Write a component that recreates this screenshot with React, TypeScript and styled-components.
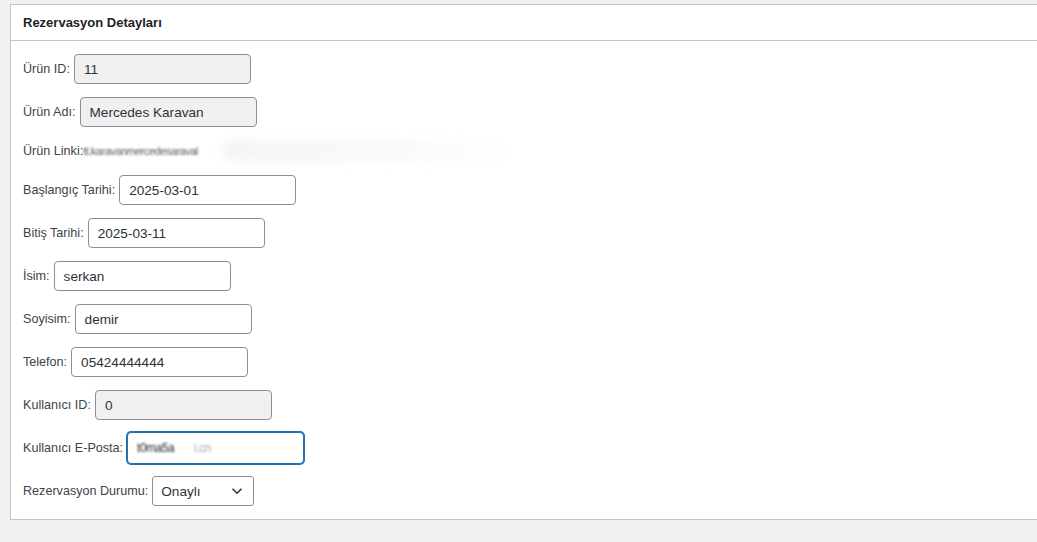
import styled, { createGlobalStyle } from 'styled-components';

const GlobalStyle = createGlobalStyle`
	html, body {
		margin: 0;
		padding: 0;
		background: #f0f0f1;
		overflow: hidden;
	}

	body {
		font-family: "Liberation Sans", Arial, sans-serif;
		color: #3c434a;
		font-size: 13px;
	}
`;

const Page = styled.div`
	padding: 4px 0 0 10px;
	height: 538px;
`;

const Postbox = styled.section`
	background: #fff;
	border: 1px solid #c3c4c7;
	margin-right: -30px;
`;

const Header = styled.div`
	height: 35px;
	display: flex;
	align-items: center;
	padding: 0 12px;
	border-bottom: 1px solid #c3c4c7;
`;

const Title = styled.h2`
	margin: 0;
	font-size: 13px;
	font-weight: 700;
	color: #1d2327;
`;

const Inside = styled.div`
	padding: 13px 12px 13px;
	display: flex;
	flex-direction: column;
	gap: 13px;
`;

const Row = styled.div<{ $h?: number }>`
	display: flex;
	align-items: center;
	gap: 4px;
	height: ${(p) => p.$h ?? 30}px;
`;

const Label = styled.label`
	font-size: 12.6px;
	color: #3c434a;
	white-space: nowrap;
`;

const Input = styled.div<{ $readonly?: boolean; $focus?: boolean }>`
	box-sizing: border-box;
	width: 177px;
	height: ${(p) => (p.$focus ? 32 : 30)}px;
	margin: ${(p) => (p.$focus ? '-1px 0' : '0')};
	display: flex;
	align-items: center;
	padding: 0 9px;
	border: 1px solid ${(p) => (p.$focus ? '#2271b1' : '#8c8f94')};
	box-shadow: ${(p) => (p.$focus ? '0 0 0 1px #2271b1' : 'none')};
	border-radius: 4px;
	background: ${(p) => (p.$readonly ? '#f0f0f1' : '#fff')};
	font-size: 13.6px;
	color: #2c3338;
`;

const Blurred = styled.span<{ $w: number; $dark?: boolean }>`
	display: inline-block;
	width: ${(p) => p.$w}px;
	overflow: hidden;
	white-space: nowrap;
	color: ${(p) => (p.$dark ? '#1d2327' : '#50575e')};
	font-size: ${(p) => (p.$dark ? 12 : 11)}px;
	filter: blur(${(p) => (p.$dark ? 0.9 : 0.8)}px);
	letter-spacing: -0.5px;
`;

const Trail = styled.span`
	color: #a7aaad;
`;

const LinkFade = styled.span`
	display: inline-block;
	height: 22px;
	width: 290px;
	margin-left: -6px;
	background: linear-gradient(90deg, rgba(238, 238, 240, 0.6), rgba(240, 240, 241, 0.3) 70%, rgba(255, 255, 255, 0));
	filter: blur(4px);
	border-radius: 10px;
`;

const Select = styled.div`
	box-sizing: border-box;
	width: 102px;
	height: 30px;
	display: flex;
	align-items: center;
	justify-content: space-between;
	padding: 0 10px 0 8px;
	border: 1px solid #8c8f94;
	border-radius: 3px;
	background: #fff;
	font-size: 13.6px;
	color: #2c3338;
`;

const Chevron = () => (
	<svg width="12" height="8" viewBox="0 0 12 8">
		<path d="M1.5 1.8 L6 6.2 L10.5 1.8" fill="none" stroke="#2c3338" strokeWidth="1.6" />
	</svg>
);

type Field = { label: string; value: string; readonly?: boolean };

const topFields: Field[] = [
	{ label: 'Ürün ID:', value: '11', readonly: true },
	{ label: 'Ürün Adı:', value: 'Mercedes Karavan', readonly: true },
];

const midFields: Field[] = [
	{ label: 'Başlangıç Tarihi:', value: '2025-03-01' },
	{ label: 'Bitiş Tarihi:', value: '2025-03-11' },
	{ label: 'İsim:', value: 'serkan' },
	{ label: 'Soyisim:', value: 'demir' },
	{ label: 'Telefon:', value: '05424444444' },
	{ label: 'Kullanıcı ID:', value: '0', readonly: true },
];

const FieldRow = ({ label, value, readonly }: Field) => (
	<Row>
		<Label>{label}</Label>
		<Input $readonly={readonly}>{value}</Input>
	</Row>
);

const App = () => {
	return (
		<Page>
			<GlobalStyle />
			<Postbox>
				<Header>
					<Title>Rezervasyon Detayları</Title>
				</Header>
				<Inside>
					{topFields.map((f) => (
						<FieldRow key={f.label} {...f} />
					))}
					<Row $h={22} style={{ gap: 0 }}>
						<Label>Ürün Linki:</Label>
						<Blurred $w={145}>tt.karavanmercedesaraval</Blurred>
						<LinkFade />
					</Row>
					{midFields.map((f) => (
						<FieldRow key={f.label} {...f} />
					))}
					<Row>
						<Label>Kullanıcı E-Posta:</Label>
						<Input $focus>
							<Blurred $w={110} $dark>
								t0ma5a&nbsp;&nbsp;&nbsp;&nbsp;&nbsp;&nbsp;&nbsp;<Trail>i.cn</Trail>
							</Blurred>
						</Input>
					</Row>
					<Row>
						<Label>Rezervasyon Durumu:</Label>
						<Select>
							Onaylı
							<Chevron />
						</Select>
					</Row>
				</Inside>
			</Postbox>
		</Page>
	);
};

export default App;
